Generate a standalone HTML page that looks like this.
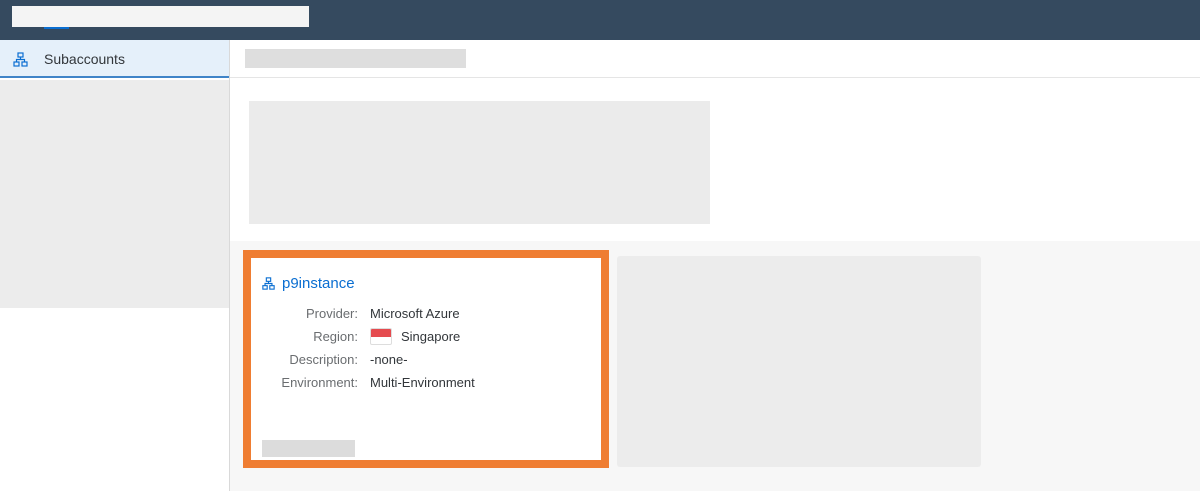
<!DOCTYPE html>
<html><head><style>
*{margin:0;padding:0;box-sizing:border-box}
body{width:1200px;height:491px;position:relative;overflow:hidden;background:#fff;font-family:"Liberation Sans",Arial,sans-serif;color:#32363a}
.a{position:absolute}
.row{position:absolute;left:252px;width:340px;font-size:13px;height:16px;line-height:16px}
.row .l{position:absolute;right:calc(340px - 106px);text-align:right;color:#6a6d70;white-space:nowrap}
.row .v{position:absolute;left:118px;white-space:nowrap}
</style></head><body>
<div class="a" style="left:0;top:0;width:1200px;height:40px;background:#354a5f"></div>
<div class="a" style="left:12px;top:6px;width:297px;height:21px;background:#f4f4f4"></div>
<div class="a" style="left:44px;top:27px;width:25px;height:2px;background:#0a6ed1"></div>
<div class="a" style="left:0;top:40px;width:229px;height:38px;background:#e5f0fa;border-bottom:2px solid #3f84c8"></div>
<svg class="a" style="left:13px;top:52px" width="15" height="15" viewBox="0 0 15 15" fill="none" stroke="#0a6ed1" stroke-width="1.2"><rect x="5" y="1" width="5" height="4"/><rect x="1" y="10" width="5" height="4"/><rect x="9" y="10" width="5" height="4"/><path d="M7.5 5v2.5M3.5 10V7.5h8V10"/></svg>
<div class="a" style="left:44px;top:51px;font-size:14px;color:#32363a">Subaccounts</div>
<div class="a" style="left:0;top:80px;width:229px;height:228px;background:#ececec"></div>
<div class="a" style="left:229px;top:40px;width:1px;height:451px;background:#d9d9d9"></div>
<div class="a" style="left:230px;top:77px;width:970px;height:1px;background:#e5e5e5"></div>
<div class="a" style="left:245px;top:49px;width:221px;height:19px;background:#dedede"></div>
<div class="a" style="left:249px;top:101px;width:461px;height:123px;background:#ebebeb"></div>
<div class="a" style="left:230px;top:241px;width:970px;height:250px;background:#f7f7f7"></div>
<div class="a" style="left:243px;top:250px;width:366px;height:218px;background:#fff;border:8px solid #ef7d32"></div>
<div class="a" style="left:617px;top:256px;width:364px;height:211px;background:#ececec;border-radius:3px"></div>
<svg class="a" style="left:262px;top:277px" width="13" height="13" viewBox="0 0 15 15" fill="none" stroke="#0a6ed1" stroke-width="1.3"><rect x="5" y="1" width="5" height="4"/><rect x="1" y="10" width="5" height="4"/><rect x="9" y="10" width="5" height="4"/><path d="M7.5 5v2.5M3.5 10V7.5h8V10"/></svg>
<div class="a" style="left:282px;top:275px;font-size:15px;color:#0a6ed1">p9instance</div>
<div class="row" style="top:306px"><span class="l">Provider:</span><span class="v">Microsoft Azure</span></div>
<div class="row" style="top:329px"><span class="l">Region:</span><span class="v" style="left:149px">Singapore</span></div>
<div class="a" style="left:370px;top:328px;width:22px;height:17px;border:1px solid #ddd;border-radius:2px;overflow:hidden"><div style="height:8px;background:#e54b4f"></div></div>
<div class="row" style="top:352px"><span class="l">Description:</span><span class="v">-none-</span></div>
<div class="row" style="top:375px"><span class="l">Environment:</span><span class="v">Multi-Environment</span></div>
<div class="a" style="left:262px;top:440px;width:93px;height:17px;background:#dcdcdc"></div>
</body></html>
